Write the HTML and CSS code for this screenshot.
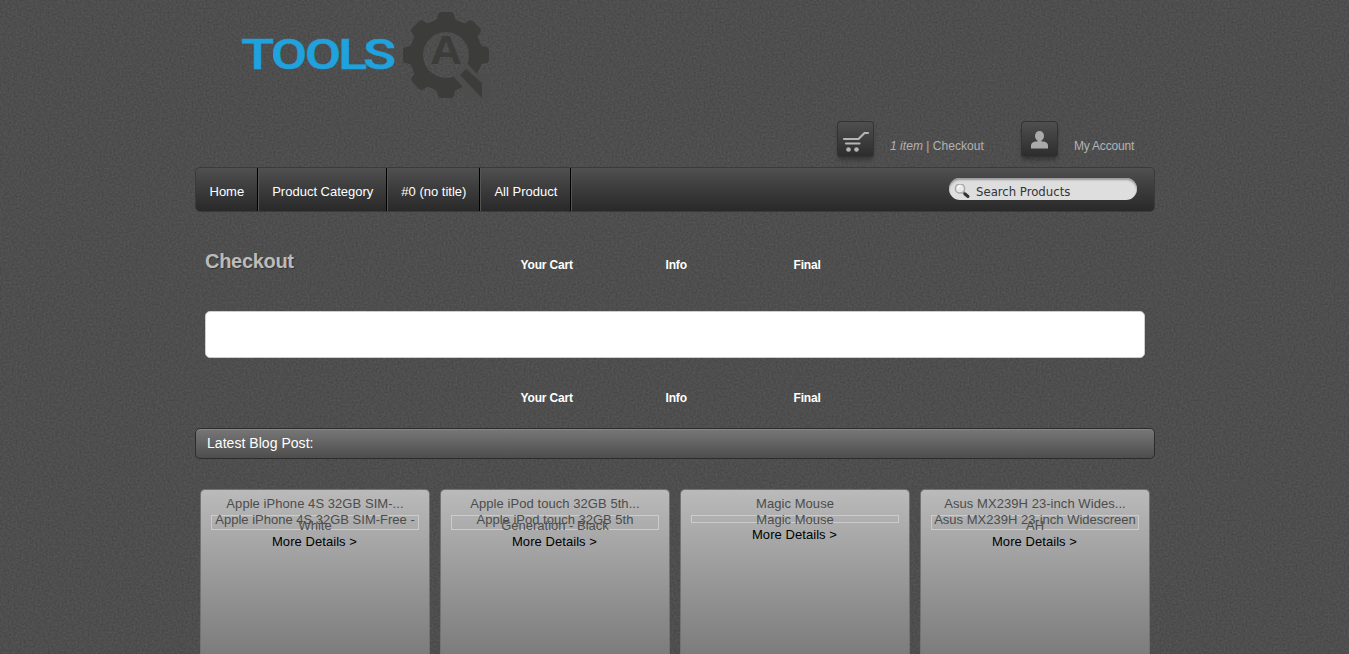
FILE: index.html
```
<!DOCTYPE html>
<html lang="en">
<head>
<meta charset="utf-8">
<title>Checkout</title>
<link rel="stylesheet" href="styles.css">
</head>
<body>
<svg class="grain" aria-hidden="true">
  <filter id="noise" x="0" y="0" width="100%" height="100%" color-interpolation-filters="sRGB">
    <feTurbulence type="fractalNoise" baseFrequency="0.5" numOctaves="2" seed="4"/>
    <feColorMatrix values="0.1 0 0 0 0.256  0.1 0 0 0 0.256  0.1 0 0 0 0.256  0 0 0 0 1"/>
  </filter>
  <rect width="100%" height="100%" filter="url(#noise)"/>
</svg>
<div class="page">
  <header class="header">
    <a class="logo">
      <svg width="250" height="90" viewBox="0 0 250 90">
        <g class="logo-word">
          <text x="-1" y="59" textLength="33" lengthAdjust="spacingAndGlyphs">T</text>
          <text x="29" y="59" textLength="36" lengthAdjust="spacingAndGlyphs">O</text>
          <text x="63" y="59" textLength="36" lengthAdjust="spacingAndGlyphs">O</text>
          <text x="96" y="59" textLength="29" lengthAdjust="spacingAndGlyphs">L</text>
          <text x="121" y="59" textLength="33" lengthAdjust="spacingAndGlyphs">S</text>
        </g>
        <g transform="translate(204 45)" fill="#3c3c3a">
          <circle r="29.5" fill="none" stroke="#3c3c3a" stroke-width="13"/>
          <path id="tooth" d="M-15 -32 L-9 -36 L-8 -41 Q-7 -43 -4 -43 L4 -43 Q7 -43 8 -41 L9 -36 L15 -32Z"/>
          <use href="#tooth" transform="rotate(45)"/>
          <use href="#tooth" transform="rotate(90)"/>
          <use href="#tooth" transform="rotate(180)"/>
          <use href="#tooth" transform="rotate(225)"/>
          <use href="#tooth" transform="rotate(270)"/>
          <use href="#tooth" transform="rotate(315)"/>
          <path fill="#4d4d4d" d="M8 22L16 31L20 45H45V20L30 18L21 8L14 14Z"/>
          <path d="M14 20L20 14L36 28V43Z"/>
          <text class="logo-a" x="-16" y="9" textLength="32" lengthAdjust="spacingAndGlyphs">A</text>
        </g>
      </svg>
    </a>
    <div class="account-bar">
      <a class="tile">
        <svg width="37" height="36" viewBox="0 0 37 36" fill="none" stroke="#b5b5b5" stroke-linecap="round">
          <path stroke-width="2.2" d="M7 18H21.5L27.5 12H31M9 22.5H22.5"/>
          <circle cx="11.5" cy="28.5" r="2.3" fill="#b5b5b5" stroke="none"/>
          <circle cx="19.5" cy="28.5" r="2.3" fill="#b5b5b5" stroke="none"/>
        </svg>
      </a>
      <span class="cart-text"><em>1 item</em> | Checkout</span>
      <a class="tile">
        <svg width="37" height="36" viewBox="0 0 37 36" fill="#aaa">
          <ellipse cx="18.5" cy="15" rx="4.5" ry="5"/>
          <path d="M16.5 18H20.5V20.5H23Q27 21.5 27 24.5V27.5H10V24.5Q10 21.5 14 20.5H16.5Z"/>
        </svg>
      </a>
      <span class="account-text">My Account</span>
    </div>
  </header>

  <nav class="nav">
    <a>Home</a><a>Product Category</a><a>#0 (no title)</a><a>All Product</a>
    <div class="search">
      <svg width="18" height="18" viewBox="0 0 18 18" fill="none">
        <path stroke="#777" stroke-width="2.5" d="M9 8L12 11"/>
        <path stroke="#333" stroke-width="3" stroke-linecap="round" d="M11 10L14 12.5"/>
        <circle cx="6" cy="4.5" r="4.6" fill="#e9e9e9" stroke="#aaa" stroke-width="1.5"/>
        <path stroke="#fff" stroke-width="1.5" d="M3.5 4.5Q4 2 6.5 2"/>
      </svg>
      <span>Search Products</span>
    </div>
  </nav>

  <main class="checkout">
    <div class="checkout-head">
      <h1>Checkout</h1>
      <ul class="steps"><li>Your Cart</li><li>Info</li><li>Final</li></ul>
    </div>
    <div class="panel"></div>
    <ul class="steps steps-bottom"><li>Your Cart</li><li>Info</li><li>Final</li></ul>
  </main>

  <h2 class="blog-title">Latest Blog Post:</h2>
  <section class="products">
    <article class="card">
      <h3>Apple iPhone 4S 32GB SIM-...</h3>
      <div class="thumb">Apple iPhone 4S 32GB SIM-Free -<br>White</div>
      <a>More Details &gt;</a>
    </article>
    <article class="card">
      <h3>Apple iPod touch 32GB 5th...</h3>
      <div class="thumb">Apple iPod touch 32GB 5th<br>Generation - Black</div>
      <a>More Details &gt;</a>
    </article>
    <article class="card">
      <h3>Magic Mouse</h3>
      <div class="thumb thumb-single">Magic Mouse</div>
      <a>More Details &gt;</a>
    </article>
    <article class="card">
      <h3>Asus MX239H 23-inch Wides...</h3>
      <div class="thumb">Asus MX239H 23-inch Widescreen<br>AH</div>
      <a>More Details &gt;</a>
    </article>
  </section>
</div>
</body>
</html>
```
FILE: styles.css
```
* { box-sizing: border-box; }
html, body { height: 100%; }
body {
  margin: 0;
  overflow: hidden;
  background: #4d4d4d;
  font: 13px/16px "Liberation Sans", Arial, sans-serif;
  color: #fff;
}
h1, h2, h3, ul { margin: 0; padding: 0; font-weight: normal; }
ul { list-style: none; }
.grain { position: absolute; inset: 0; width: 100%; height: 100%; z-index: -1; }
.page { width: 960px; margin-left: 195px; }

.header { height: 167px; display: flex; flex-direction: column; }
.logo { height: 110px; padding: 10px 0 0 47px; }
.logo svg { display: block; overflow: visible; }
.logo-word { font: 500 43px Roboto, sans-serif; fill: #1fa2dd; stroke: #1fa2dd; stroke-width: .6px; }
.logo-a { font: bold 41px "Liberation Sans", sans-serif; }
.account-bar {
  display: flex;
  padding: 11px 0 0 642px;
  font-size: 12px;
  color: #b3b3b3;
}
.tile {
  width: 37px;
  height: 36px;
  border-radius: 4px;
  background: linear-gradient(#505050, #2c2c2c);
  box-shadow: inset 0 0 0 1px #333, 0 4px 4px -1px rgba(0, 0, 0, .3);
}
.tile svg { display: block; }
.cart-text, .account-text { padding-top: 17px; white-space: nowrap; }
.cart-text { width: 147px; padding-left: 16px; letter-spacing: .04px; }
.account-text { padding-left: 16px; letter-spacing: -.2px; }

.nav {
  display: flex;
  height: 45px;
  padding-left: 1px;
  border: 1px solid #3b3b3b;
  border-radius: 5px;
  background: linear-gradient(#505050, #3f3f3f 40%, #292929);
}
.nav a {
  padding: 16px 13px 0;
  border-right: 1px solid #000;
  box-shadow: 1px 0 0 #555;
}
.nav a:first-child { padding: 16px 13px 0 12.5px; }
.nav a + a { padding-left: 14px; }
.search {
  display: flex;
  width: 188px;
  height: 22px;
  margin: 10px 17px 0 auto;
  padding: 6px 0 0 5px;
  gap: 4px;
  border-radius: 11px;
  background: #dedede;
  box-shadow: inset 0 2px 2px #999;
  color: #33333b;
  font: 13px/16px "DejaVu Sans Condensed", "DejaVu Sans", sans-serif;
  font-stretch: condensed;
}

.checkout { padding: 37px 10px 0; height: 216px; }
.checkout-head { display: flex; height: 62px; }
h1 {
  width: 308px;
  font-weight: bold;
  font-size: 20px;
  line-height: 24px;
  letter-spacing: -.3px;
  color: #bbb;
  text-shadow: 1px 1px 1px #333;
}
.steps {
  display: grid;
  grid-template-columns: 145px 128px auto;
  padding: 8px 0 0 7.5px;
  font-weight: bold;
  font-size: 12px;
  letter-spacing: -.15px;
}
.panel {
  height: 47px;
  border: 1px solid #ccc;
  border-radius: 5px;
  background: #fff;
}
.steps-bottom { padding: 32px 0 0 315.5px; }

.blog-title {
  height: 31px;
  padding: 6px 11px;
  border: 1px solid #2c2c2c;
  border-radius: 5px;
  background: linear-gradient(#777, #4d4d4d);
  box-shadow: inset 0 1px 0 #858585;
  font-size: 14px;
  line-height: 16px;
  letter-spacing: .04px;
}
.products { display: flex; gap: 10px; padding: 30px 5px 0; }
.card {
  width: 230px;
  height: 165px;
  padding: 6px 10px;
  border: 1px solid #737373;
  border-bottom: 0;
  border-radius: 5px 5px 0 0;
  background: linear-gradient(#bababa, #7c7c7c);
  text-align: center;
}
.card h3 { font-size: 13px; line-height: 16px; letter-spacing: .06px; color: #4c4c4c; }
.thumb {
  height: 15px;
  margin: 3px 0 4px;
  padding-top: 1px;
  border: 1px solid #ccc;
  line-height: 6px;
  color: #4c4c4c;
  white-space: nowrap;
}
.thumb-single { height: 8px; }
.card a { display: block; margin-left: -1px; color: #000; letter-spacing: .06px; }
```
